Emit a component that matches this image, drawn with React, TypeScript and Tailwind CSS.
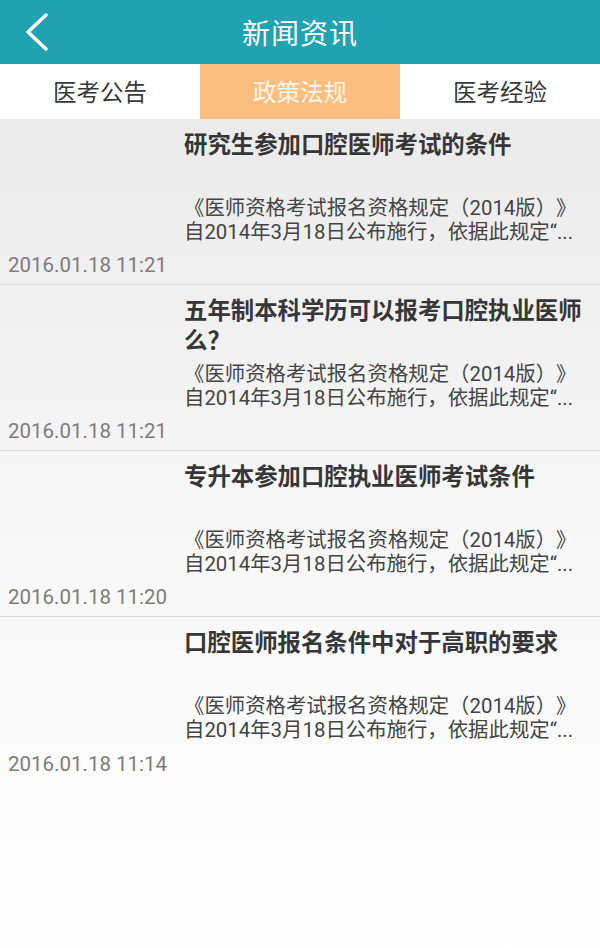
const desc1 = "《医师资格考试报名资格规定（2014版）》";
const desc2 = "自2014年3月18日公布施行，依据此规定“...";

const news = [
  { title: "研究生参加口腔医师考试的条件", date: "2016.01.18 11:21" },
  { title: "五年制本科学历可以报考口腔执业医师么？", date: "2016.01.18 11:21" },
  { title: "专升本参加口腔执业医师考试条件", date: "2016.01.18 11:20" },
  { title: "口腔医师报名条件中对于高职的要求", date: "2016.01.18 11:14" },
];

const tabs = ["医考公告", "政策法规", "医考经验"];

function NewsItem({ title, date, last }: { title: string; date: string; last: boolean }) {
  return (
    <div className={`flex h-[166px] ${last ? "" : "border-b border-[#dadada]"}`}>
      {/* date sits bottom-left */}
      <div className="w-[184px] shrink-0 flex flex-col justify-end pl-[8px] pb-[7px]">
        <span className="text-[20.5px] leading-[24px] text-[#7c7c7c]">{date}</span>
      </div>
      <div className="flex-1 pt-[11px] pr-[8px]">
        <h3 className="h-[60px] text-[23.4px] leading-[30px] font-bold text-[#363636] [text-spacing-trim:space-all]">
          {title}
        </h3>
        <p className="mt-[6px] text-[20.4px] leading-[24px] text-[#444] whitespace-nowrap [text-spacing-trim:space-all]">
          {desc1}
          <br />
          {desc2}
        </p>
      </div>
    </div>
  );
}

export default function App() {
  return (
    <div
      className="w-[600px] h-[948px] flex flex-col overflow-hidden"
      style={{ fontFamily: 'Roboto, "Noto Sans CJK SC", sans-serif' }}
    >
      {/* Header */}
      <header className="h-[64px] shrink-0 bg-[#20a2b0] flex items-center relative">
        <button className="absolute left-[22px] top-[12px] w-[30px] h-[40px] flex items-center justify-center" aria-label="Back">
          <svg width="28" height="40" viewBox="0 0 28 40" fill="none">
            <path d="M23 3 L5 20 L23 37" stroke="white" strokeWidth="3.5" strokeLinecap="round" strokeLinejoin="round" />
          </svg>
        </button>
        <h1 className="flex-1 text-center text-white text-[28px] tracking-[1px] pt-[5px]">新闻资讯</h1>
      </header>

      {/* Tabs */}
      <nav className="h-[55px] shrink-0 flex bg-white">
        {tabs.map((t, i) => (
          <div
            key={t}
            className={`flex-1 flex items-center justify-center text-[23.5px] pt-[4px] ${
              i === 1 ? "bg-[#fdbe7f] text-[#fff6ec]" : "text-[#3a3a3a]"
            }`}
          >
            {t}
          </div>
        ))}
      </nav>

      {/* List */}
      <div className="flex-1 bg-gradient-to-b from-[#ebebeb] via-[#f7f7f7] to-white">
        {news.map((n, i) => (
          <NewsItem key={i} title={n.title} date={n.date} last={i === news.length - 1} />
        ))}
      </div>
    </div>
  );
}
